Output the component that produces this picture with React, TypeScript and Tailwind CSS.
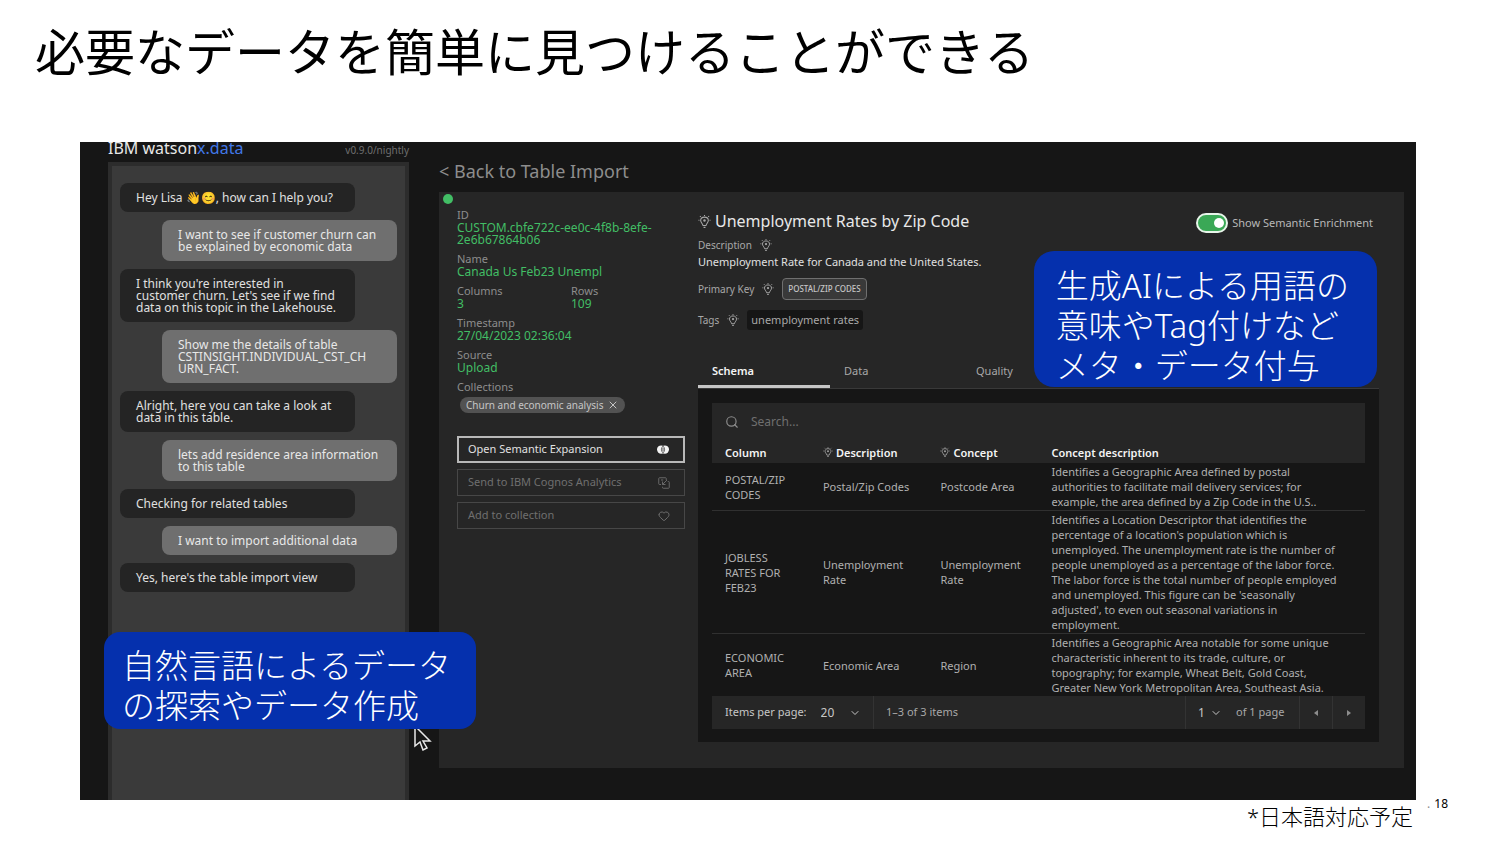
import { useState } from 'react'
import { ChevronDown, Heart, Search, X } from 'lucide-react'

type Message = { from: 'bot' | 'user'; text: string }

const MESSAGES: Message[] = [
  { from: 'bot',  text: 'Hey Lisa 👋😊, how can I help you?' },
  { from: 'user', text: 'I want to see if customer churn can be explained by economic data' },
  { from: 'bot',  text: "I think you're interested in customer churn. Let's see if we find data on this topic in the Lakehouse." },
  { from: 'user', text: 'Show me the details of table CSTINSIGHT.INDIVIDUAL_CST_CH\nURN_FACT.' },
  { from: 'bot',  text: 'Alright, here you can take a look at data in this table.' },
  { from: 'user', text: 'lets add residence area information to this table' },
  { from: 'bot',  text: 'Checking for related tables' },
  { from: 'user', text: 'I want to import additional data' },
  { from: 'bot',  text: "Yes, here's the table import view" },
]

const ROWS = [
  {
    column: 'POSTAL/ZIP CODES',
    description: 'Postal/Zip Codes',
    concept: 'Postcode Area',
    detail: 'Identifies a Geographic Area defined by postal authorities to facilitate mail delivery services; for example, the area defined by a Zip Code in the U.S..',
  },
  {
    column: 'JOBLESS RATES FOR FEB23',
    description: 'Unemployment Rate',
    concept: 'Unemployment Rate',
    detail: "Identifies a Location Descriptor that identifies the percentage of a location's population which is unemployed. The unemployment rate is the number of people unemployed as a percentage of the labor force. The labor force is the total number of people employed and unemployed. This figure can be 'seasonally adjusted', to even out seasonal variations in employment.",
  },
  {
    column: 'ECONOMIC AREA',
    description: 'Economic Area',
    concept: 'Region',
    detail: 'Identifies a Geographic Area notable for some unique characteristic inherent to its trade, culture, or topography; for example, Wheat Belt, Gold Coast, Greater New York Metropolitan Area, Southeast Asia.',
  },
]

const TABS = ['Schema', 'Data', 'Quality']

function IdeaIcon({ className = 'w-3 h-3' }: { className?: string }) {
  return (
    <svg viewBox="0 0 16 16" className={`shrink-0 ${className}`} fill="none" stroke="currentColor" strokeWidth="1.3" aria-hidden="true">
      <path d="M8 2.6c-2.9 0-4.7 1.8-4.7 4.2 0 2.3 2 3.2 2.9 6.2h3.6c.9-3 2.9-3.9 2.9-6.2C12.7 4.4 10.9 2.6 8 2.6Z" />
      <path d="M6.8 15.2h2.4M8 0v1.2M2.4 1.4l1 1M13.6 1.4l-1 1M.6 6.4h1.2M14.2 6.4h1.2" />
      <circle cx="8" cy="6.8" r="1.5" fill="currentColor" stroke="none" />
    </svg>
  )
}

function IntersectIcon() {
  return (
    <svg viewBox="0 0 16 12" className="w-3 h-[9px]" aria-hidden="true">
      <circle cx="5.5" cy="6" r="5.5" fill="#f4f4f4" />
      <circle cx="10.5" cy="6" r="5.5" fill="#f4f4f4" />
      <path d="M8 1.6c2.8 2.6 2.8 6.2 0 8.8-2.8-2.6-2.8-6.2 0-8.8Z" fill="none" stroke="#262626" />
      <path d="M8 4v4" stroke="#262626" />
    </svg>
  )
}

function LaunchIcon() {
  return (
    <svg viewBox="0 0 16 16" className="w-3 h-3" fill="none" stroke="currentColor" strokeWidth="1.2" aria-hidden="true">
      <path d="M11 4V2a1 1 0 0 0-1-1H2a1 1 0 0 0-1 1v7a1 1 0 0 0 1 1h2" />
      <path d="M13 6h1a1 1 0 0 1 1 1v7a1 1 0 0 1-1 1H7a1 1 0 0 1-1-1v-1" />
      <path d="M6 6v4h4M6 10l6-6M4 4h3" />
    </svg>
  )
}

function Cursor() {
  return (
    <svg viewBox="0 0 20 26" className="absolute left-[332px] top-[583px] w-5 h-[26px]" aria-hidden="true">
      <path d="M3 1v20l5-4 3 8 4-2-4-7h7Z" fill="#161616" stroke="#e8e8e8" strokeWidth="1.5" />
    </svg>
  )
}

function Bubble({ from, text }: Message) {
  return (
    <li
      className={`w-[235px] whitespace-pre-line rounded-lg px-4 pt-[9px] pb-2 text-[12px] leading-3 ${
        from === 'bot' ? 'self-start bg-[#242424] text-[#e0e0e0]' : 'self-end bg-[#6f6f6f] text-[#e8e8e8]'
      }`}
    >
      {text}
    </li>
  )
}

function Fact({ label, value }: { label: string; value: string }) {
  return (
    <div>
      <dt className="text-[11px] leading-[14px] text-[#8d8d8d]">{label}</dt>
      <dd className="text-[12px] leading-3 text-[#42be65]">{value}</dd>
    </div>
  )
}

function ChatPanel() {
  return (
    <aside className="w-[301px] shrink-0 flex flex-col">
      <div className="flex items-start justify-between">
        <h2 className="text-[16px] leading-3 text-[#e8e8e8]">
          IBM watson<span className="text-[#4178e8]">x.data</span>
        </h2>
        <span className="text-[10px] leading-4 text-[#6f6f6f]">v0.9.0/nightly</span>
      </div>
      <ul className="mt-1 flex-1 flex flex-col gap-2 border-x-4 border-t-4 border-[#2c2c2c] bg-[#3a3a3a] px-2 pt-[17px]">
        {MESSAGES.map(m => <Bubble key={m.text} {...m} />)}
      </ul>
    </aside>
  )
}

function TableFacts() {
  return (
    <div className="w-[228px] shrink-0 pt-1">
      <dl className="flex flex-col gap-1.5">
        <Fact label="ID" value="CUSTOM.cbfe722c-ee0c-4f8b-8efe-2e6b67864b06" />
        <Fact label="Name" value="Canada Us Feb23 Unempl" />
        <div className="grid grid-cols-2">
          <Fact label="Columns" value="3" />
          <Fact label="Rows" value="109" />
        </div>
        <Fact label="Timestamp" value="27/04/2023 02:36:04" />
        <Fact label="Source" value="Upload" />
        <div>
          <dt className="text-[11px] leading-[14px] text-[#8d8d8d]">Collections</dt>
          <dd className="mt-[3px] ml-[3px] flex">
            <span className="flex h-4 items-center gap-1 rounded-full bg-[#525252] px-1.5 text-[10px] leading-4 text-[#c6c6c6]">
              Churn and economic analysis
              <button aria-label="Remove from collection"><X className="w-3 h-3" /></button>
            </span>
          </dd>
        </div>
      </dl>

      <div className="mt-[23px] flex flex-col gap-1.5">
        <button className="flex h-[27px] items-center justify-between border-2 border-[#b8b8b8] pl-[9px] pr-3.5 text-[11px] text-[#e0e0e0]">
          Open Semantic Expansion <IntersectIcon />
        </button>
        <button className="flex h-[27px] items-center justify-between border border-[#474747] pl-2.5 pr-3.5 text-[11px] text-[#6f6f6f]">
          Send to IBM Cognos Analytics <LaunchIcon />
        </button>
        <button className="flex h-[27px] items-center justify-between border border-[#474747] pl-2.5 pr-3.5 text-[11px] text-[#6f6f6f]">
          Add to collection <Heart className="w-3 h-3" />
        </button>
      </div>
    </div>
  )
}

function SchemaTable() {
  return (
    <div className="bg-[#161616] px-3.5 pt-3.5 pb-[13px]">
      <div className="flex h-[38px] items-center gap-3 bg-[#262626] px-[13px] text-[#8d8d8d]">
        <Search className="w-3.5 h-3.5" />
        <input
          type="search"
          aria-label="Search columns"
          placeholder="Search..."
          className="flex-1 bg-transparent text-[12px] placeholder-[#6f6f6f] focus:outline-none"
        />
      </div>

      <table className="w-full table-fixed text-left text-[11px] leading-[15px] text-[#b0b0b0]">
        <thead className="bg-[#262626] text-[#f4f4f4]">
          <tr className="h-[22px]">
            <th className="w-[15%] pl-[13px] font-semibold">Column</th>
            <th className="w-[18%] pl-[13px] font-semibold">
              <span className="flex items-center gap-[3px]"><IdeaIcon className="w-2.5 h-2.5 text-[#a8a8a8]" />Description</span>
            </th>
            <th className="w-[17%] pl-[13px] font-semibold">
              <span className="flex items-center gap-[3px]"><IdeaIcon className="w-2.5 h-2.5 text-[#a8a8a8]" />Concept</span>
            </th>
            <th className="w-[50%] pl-[13px] font-semibold">Concept description</th>
          </tr>
        </thead>
        <tbody>
          {ROWS.map(row => (
            <tr key={row.column} className="border-b border-[#303030] last:border-b-0">
              <td className="py-px pl-[13px] pr-4">{row.column}</td>
              <td className="py-px pl-[13px] pr-2">{row.description}</td>
              <td className="py-px pl-[13px] pr-2">{row.concept}</td>
              <td className="py-px pl-[13px] pr-6">{row.detail}</td>
            </tr>
          ))}
        </tbody>
      </table>

      <div className="flex h-[33px] items-stretch bg-[#262626] text-[11px] text-[#c6c6c6]">
        <label className="flex w-[162px] items-center gap-3.5 border-r border-[#333333] pl-[13px]">
          Items per page:
          <span className="relative flex items-center">
            <select className="w-10 appearance-none bg-transparent text-[12px] focus:outline-none">
              <option>20</option>
            </select>
            <ChevronDown className="pointer-events-none absolute right-0 w-3 h-3" />
          </span>
        </label>
        <span className="flex flex-1 items-center pl-3 text-[#a8a8a8]">1–3 of 3 items</span>
        <div className="flex w-[114px] items-center gap-3.5 border-l border-[#333333] pl-3">
          <span className="relative flex items-center">
            <select aria-label="Page" className="w-6 appearance-none bg-transparent text-[12px] focus:outline-none">
              <option>1</option>
            </select>
            <ChevronDown className="pointer-events-none absolute right-0 w-3 h-3" />
          </span>
          <span className="text-[#a8a8a8]">of 1 page</span>
        </div>
        <button aria-label="Previous page" className="flex w-[33px] items-center justify-center border-l border-[#333333]">
          <svg viewBox="0 0 6 8" className="w-1.5 h-2" fill="#8d8d8d"><path d="M5 1v6L1 4Z" /></svg>
        </button>
        <button aria-label="Next page" className="flex w-[33px] items-center justify-center border-l border-[#333333]">
          <svg viewBox="0 0 6 8" className="w-1.5 h-2" fill="#8d8d8d"><path d="M1 1v6l4-3Z" /></svg>
        </button>
      </div>
    </div>
  )
}

function TableDetails() {
  const [tab, setTab] = useState('Schema')
  const [enriched, setEnriched] = useState(true)

  return (
    <div className="min-w-0 flex-1 pt-[5px]">
      <div className="flex items-end justify-between pr-1.5 text-[#e8e8e8]">
        <h3 className="flex items-center gap-1 text-[16px] leading-6">
          <IdeaIcon className="w-[13px] h-[13px] text-[#a8a8a8]" />
          Unemployment Rates by Zip Code
        </h3>
        <label className="flex items-center gap-1 text-[11px] leading-5 text-[#b8b8b8]">
          <input
            type="checkbox"
            checked={enriched}
            onChange={e => setEnriched(e.target.checked)}
            className="flex h-5 w-8 appearance-none items-center justify-start rounded-full border-2 border-[#e8f5ea] bg-[#6f6f6f] px-0.5 checked:justify-end checked:bg-[#3aa856] after:h-2.5 after:w-2.5 after:rounded-full after:bg-white"
          />
          Show Semantic Enrichment
        </label>
      </div>

      <div className="mt-1 flex items-center gap-2 text-[10px] leading-4 text-[#a8a8a8]">
        Description <IdeaIcon />
      </div>
      <p className="mt-px text-[11px] leading-4 text-[#e0e0e0]">Unemployment Rate for Canada and the United States.</p>

      <div className="mt-2 flex items-center gap-2 text-[10px] text-[#a8a8a8]">
        Primary Key <IdeaIcon />
        <span className="rounded-[4px] border border-[#6f6f6f] bg-[#393939] px-[5px] text-[8px] leading-5 font-medium text-[#c6c6c6]">POSTAL/ZIP CODES</span>
      </div>
      <div className="mt-2.5 flex items-center gap-2 text-[10px] text-[#a8a8a8]">
        Tags <IdeaIcon />
        <span className="rounded-[3px] bg-[#161616] px-1 text-[11px] leading-5 text-[#a8a8a8]">unemployment rates</span>
      </div>

      <div role="tablist" className="mt-7 flex border-b border-[#393939]">
        {TABS.map(t => (
          <button
            key={t}
            role="tab"
            aria-selected={tab === t}
            onClick={() => setTab(t)}
            className={`h-[30px] w-[132px] border-b-[3px] pl-3.5 text-left text-[11px] ${
              tab === t ? 'border-[#c6c6c6] font-semibold text-[#f4f4f4]' : 'border-transparent text-[#a8a8a8]'
            }`}
          >
            {t}
          </button>
        ))}
      </div>
      <SchemaTable />
    </div>
  )
}

export default function App() {
  return (
    <main className="bg-white pt-3 text-black font-['Noto_Sans','Noto_Sans_CJK_JP',sans-serif]">
      <h1 className="pl-[35px] text-[50px] leading-[80px]">必要なデータを簡単に見つけることができる</h1>

      <div className="relative mt-[50px] ml-20 mr-[84px]">
        <div className="flex gap-[30px] overflow-hidden bg-[#161616] pl-7 pr-3">
          <ChatPanel />

          <section className="min-w-0 flex-1 pt-[17px] pb-8">
            <a href="#import" className="block text-[18px] leading-6 text-[#8d8d8d]">&lt; Back to Table Import</a>
            <div className="mt-[9px] bg-[#262626] pt-0.5 pb-[26px]">
              <div className="ml-1 h-2.5 w-2.5 rounded-full bg-[#42be65]" />
              <div className="flex gap-[13px] pl-[18px] pr-[25px]">
                <TableFacts />
                <TableDetails />
              </div>
            </div>
          </section>
        </div>

        <Cursor />
        <p className="absolute left-6 top-[490px] rounded-2xl bg-[#0530ad] pt-3.5 pb-[3px] pl-[18px] pr-[25px] text-[33px] leading-10 font-light text-white">
          自然言語によるデータ<br />の探索やデータ作成
        </p>
        <p className="absolute right-[39px] top-[109px] rounded-[20px] bg-[#0530ad] pt-[15px] pb-px pl-[22px] pr-7 text-[33px] leading-10 font-light text-white">
          生成AIによる用語の<br />意味やTag付けなど<br />メタ・データ付与
        </p>
      </div>

      <footer className="flex items-start justify-end gap-3.5 pr-[52px]">
        <p className="text-[22px] leading-8 font-light">*日本語対応予定</p>
        <p className="text-[12px] leading-2"><span className="mr-1 text-[#8d8d8d]">.</span>18</p>
      </footer>
    </main>
  )
}
